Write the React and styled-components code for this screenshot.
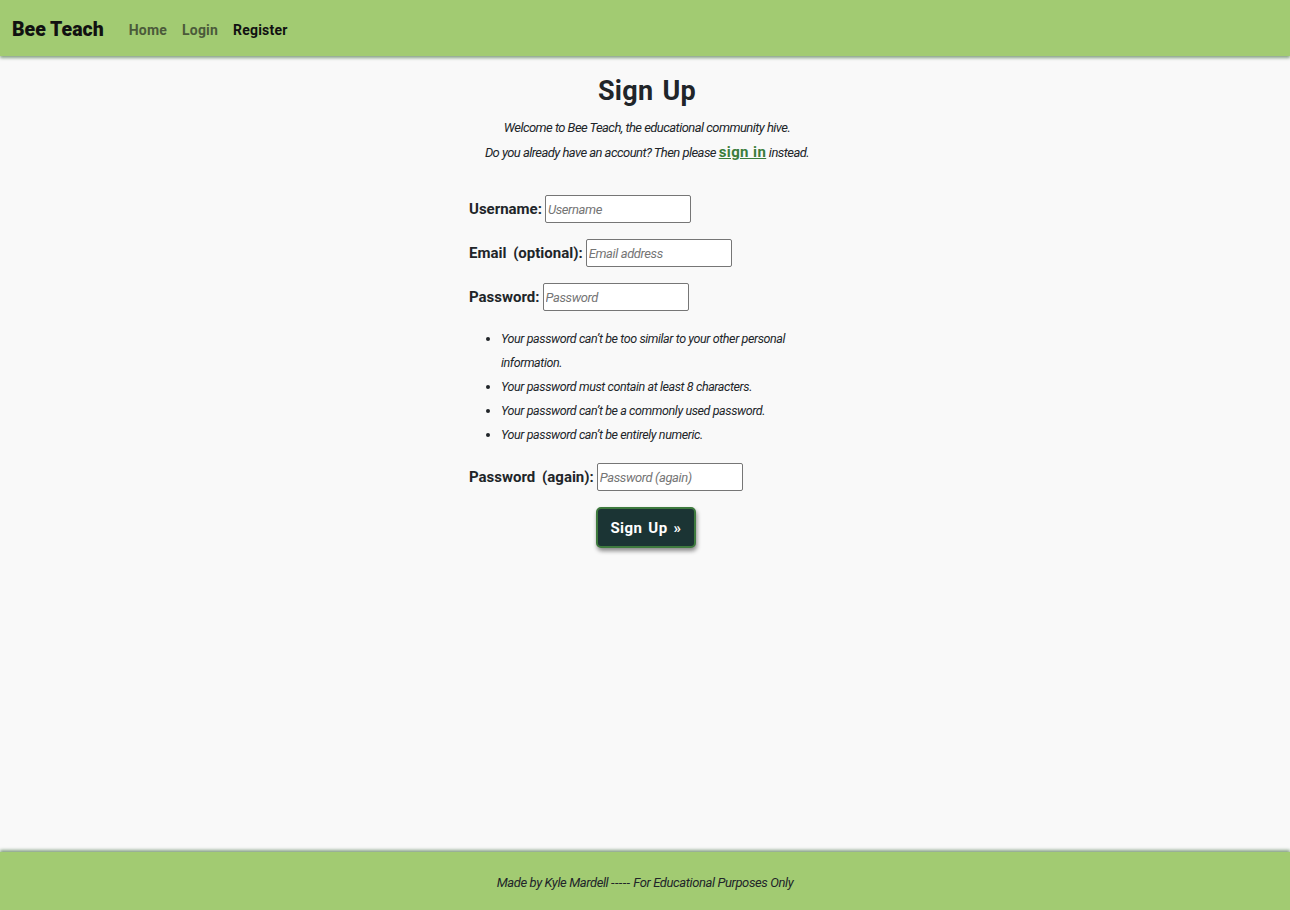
import React from 'react';
import styled, { createGlobalStyle } from 'styled-components';

const body = `'Roboto', 'Liberation Sans', sans-serif`;
const head = `'Roboto', 'Liberation Sans', sans-serif`;

const Global = createGlobalStyle`
  html, body { margin: 0; padding: 0; }
  body {
    background: #f9f9f9;
    color: #212529;
    font-family: ${body};
  }
  #root { min-height: 910px; display: flex; flex-direction: column; }
`;

const Nav = styled.nav`
  height: 56px;
  background: #a2cb72;
  display: flex;
  align-items: center;
  padding: 3px 12px 0;
  box-sizing: border-box;
  box-shadow: 0 2px 3px rgba(40, 90, 40, 0.55);
  position: relative;
  z-index: 1;
`;

const Brand = styled.a`
  font-family: ${head};
  font-weight: 900;
  font-size: 19.5px;
  color: #111;
  margin-right: 25px;
`;

const NavLink = styled.a`
  font-family: ${head};
  font-weight: 700;
  font-size: 14px;
  letter-spacing: 0.2px;
  color: ${p => (p.active ? '#111' : '#4b5a3a')};
  margin-right: 15px;
`;

const Main = styled.main`
  flex: 1;
  display: flex;
  flex-direction: column;
  align-items: center;
  padding-top: 19px;
  padding-left: 4px;
`;

const Title = styled.h1`
  font-family: ${head};
  font-weight: 700;
  font-size: 27px;
  letter-spacing: 0.3px;
  word-spacing: 2px;
  margin: 0 0 8px;
  color: #212529;
`;

const Intro = styled.p`
  font-style: italic;
  font-size: 13px;
  letter-spacing: -0.55px;
  line-height: 25px;
  margin: 0;
  text-align: center;
`;

const SignIn = styled.a`
  font-family: ${head};
  font-style: normal;
  font-weight: 700;
  font-size: 15px;
  color: #3b7d3b;
  text-decoration: underline;
  letter-spacing: 0.4px;
`;

const Form = styled.form`
  width: 356px;
  margin-top: 30px;
  display: flex;
  flex-direction: column;
`;

const Row = styled.p`
  display: flex;
  align-items: center;
  margin: 0 0 16px;
`;

const Label = styled.label`
  font-family: ${head};
  font-weight: 700;
  font-size: 15px;
  word-spacing: 3px;
  margin-right: 3px;
`;

const Input = styled.input`
  width: 146px;
  height: 28px;
  box-sizing: border-box;
  border: 1px solid #767676;
  border-radius: 2px;
  background: #fff;
  padding: 0 2px;
  font-family: ${body};
  font-style: italic;
  font-size: 13px;
  letter-spacing: -0.4px;
  &::placeholder { color: #757575; }
`;

const Help = styled.ul`
  margin: 0 0 16px;
  padding-left: 32px;
  width: 300px;
  font-style: italic;
  font-size: 12.5px;
  letter-spacing: -0.4px;
  line-height: 24px;
`;

const Button = styled.button`
  align-self: center;
  margin-left: -2px;
  height: 41px;
  padding: 0 12px;
  background: #1b3434;
  color: #fff;
  border: 2px solid #3e7a3e;
  border-radius: 5px;
  box-shadow: 1px 3px 4px rgba(0, 0, 0, 0.45);
  font-family: ${head};
  font-weight: 700;
  font-size: 15px;
  letter-spacing: 0.4px;
  word-spacing: 2px;
`;

const Footer = styled.footer`
  height: 58px;
  background: #a2cb72;
  display: flex;
  align-items: center;
  justify-content: center;
  box-shadow: 0 -2px 3px rgba(40, 90, 40, 0.55);
  font-style: italic;
  font-size: 13px;
  letter-spacing: -0.4px;
  padding-top: 2px;
  box-sizing: border-box;
  white-space: pre;
`;

const Dashes = styled.span`
  letter-spacing: 0.4px;
`;

const rules = [
  'Your password can’t be too similar to your other personal information.',
  'Your password must contain at least 8 characters.',
  'Your password can’t be a commonly used password.',
  'Your password can’t be entirely numeric.',
];

export default function App() {
  return (
    <>
      <Global />
      <Nav>
        <Brand>Bee Teach</Brand>
        <NavLink>Home</NavLink>
        <NavLink>Login</NavLink>
        <NavLink active>Register</NavLink>
      </Nav>
      <Main>
        <Title>Sign Up</Title>
        <Intro>Welcome to Bee Teach, the educational community hive.</Intro>
        <Intro>
          Do you already have an account? Then please <SignIn>sign in</SignIn> instead.
        </Intro>
        <Form>
          <Row>
            <Label>Username:</Label>
            <Input placeholder="Username" />
          </Row>
          <Row>
            <Label>Email (optional):</Label>
            <Input placeholder="Email address" />
          </Row>
          <Row>
            <Label>Password:</Label>
            <Input type="password" placeholder="Password" />
          </Row>
          <Help>
            {rules.map(r => <li key={r}>{r}</li>)}
          </Help>
          <Row>
            <Label>Password (again):</Label>
            <Input type="password" placeholder="Password (again)" />
          </Row>
          <Button type="button">Sign Up &raquo;</Button>
        </Form>
      </Main>
      <Footer>
        Made by Kyle Mardell <Dashes>-----</Dashes> For Educational Purposes Only
      </Footer>
    </>
  );
}
